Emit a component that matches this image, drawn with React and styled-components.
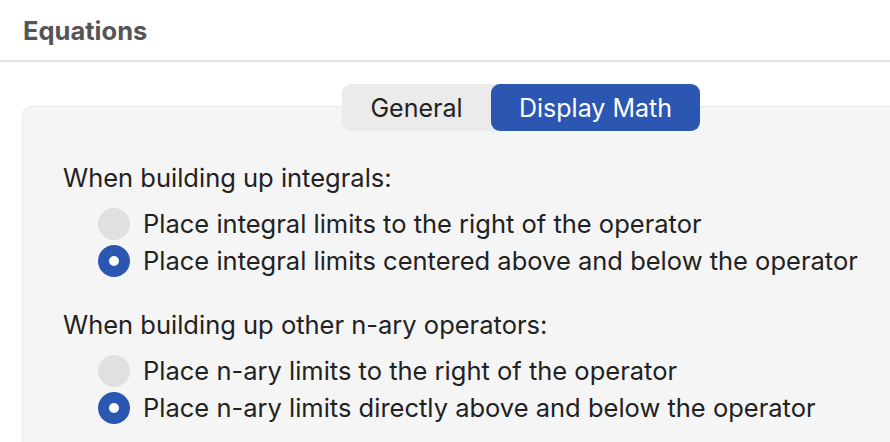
import React, { useState } from "react";
import styled, { createGlobalStyle } from "styled-components";

// --------------------------------------------------

const Global = createGlobalStyle`
	html, body {
		margin: 0;
		padding: 0;
		background: #ffffff;
		overflow: hidden;
	}
	body {
		font-family: Inter, "Open Sans", "Liberation Sans", sans-serif;
		color: #222222;
	}
`;

const Page = styled.div`
	width: 890px;
	height: 442px;
	overflow: hidden;
`;

const Header = styled.header`
	height: 60px;
	padding-left: 23px;
	display: flex;
	align-items: center;
	border-bottom: 2px solid #e3e3e3;
`;

const Title = styled.h1`
	margin: 0;
	font-size: 25.5px;
	font-weight: 700;
	color: #555555;
`;

const Panel = styled.section`
	margin: 44px 0 0 22px;
	width: 998px;
	height: 400px;
	background: #f5f5f5;
	border: 1px solid #e8e8e8;
	border-radius: 10px;
	box-sizing: border-box;
`;

const Tabs = styled.div`
	display: flex;
	justify-content: center;
	margin-top: -23px;
`;

const TabGroup = styled.div`
	display: flex;
	background: #ebebeb;
	border-radius: 9px;
`;

const Tab = styled.button`
	height: 47px;
	width: ${({ wide }) => (wide ? "209px" : "149px")};
	border: none;
	border-radius: 9px;
	padding: 0;
	font-family: inherit;
	font-size: 25px;
	cursor: pointer;
	background: ${({ active }) => (active ? "#2b57b3" : "transparent")};
	color: ${({ active }) => (active ? "#ffffff" : "#222222")};
`;

const Body = styled.div`
	padding: 28px 0 0 40px;
`;

const Group = styled.div`
	margin-bottom: 27px;
`;

const Label = styled.div`
	font-size: 25.5px;
	line-height: 37px;
	margin-bottom: 9px;
`;

const Option = styled.label`
	display: flex;
	align-items: center;
	gap: 13px;
	height: 37px;
	padding-left: 35px;
	font-size: 25.5px;
	cursor: pointer;
`;

const Dot = styled.span`
	width: 32px;
	height: 32px;
	border-radius: 50%;
	box-sizing: border-box;
	flex-shrink: 0;
	background: ${({ on }) => (on ? "#ffffff" : "#e0e0e0")};
	border: ${({ on }) => (on ? "11px solid #2b57b3" : "none")};
`;

// --------------------------------------------------

const groups = [
	{
		label: "When building up integrals:",
		options: [
			"Place integral limits to the right of the operator",
			"Place integral limits centered above and below the operator",
		],
	},
	{
		label: "When building up other n-ary operators:",
		options: [
			"Place n-ary limits to the right of the operator",
			"Place n-ary limits directly above and below the operator",
		],
	},
];

const RadioGroup = ({ label, options }) => {
	const [ picked, setPicked ] = useState(1);
	return (
		<Group>
			<Label>{ label }</Label>
			{ options.map((text, i) => (
				<Option key = { text } onClick = { () => setPicked(i) }>
					<Dot on = { picked === i ? 1 : 0 } />
					{ text }
				</Option>
			)) }
		</Group>
	);
};

export default function App() {
	const [ tab, setTab ] = useState(1);
	return (
		<Page>
			<Global />
			<Header>
				<Title>Equations</Title>
			</Header>
			<Panel>
				<Tabs>
					<TabGroup>
						<Tab active = { tab === 0 } onClick = { () => setTab(0) }>General</Tab>
						<Tab wide active = { tab === 1 } onClick = { () => setTab(1) }>Display Math</Tab>
					</TabGroup>
				</Tabs>
				<Body>
					{ groups.map(g => <RadioGroup key = { g.label } { ...g } />) }
				</Body>
			</Panel>
		</Page>
	);
}
